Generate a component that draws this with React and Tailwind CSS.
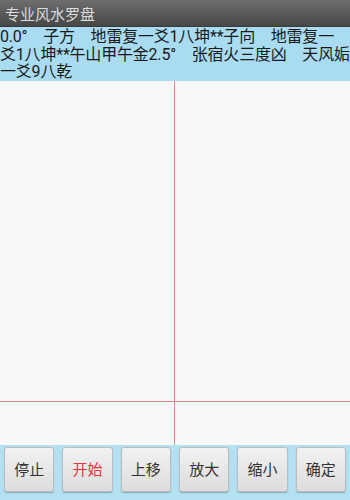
import React from "react";

const buttons = [
  { label: "停止", red: false },
  { label: "开始", red: true },
  { label: "上移", red: false },
  { label: "放大", red: false },
  { label: "缩小", red: false },
  { label: "确定", red: false },
];

const infoLines = [
  "0.0°\u3000子方\u3000地雷复一爻1八坤**子向\u3000地雷复一",
  "爻1八坤**午山甲午金2.5°\u3000张宿火三度凶\u3000天风姤",
  "一爻9八乾",
];

export default function App() {
  return (
    <div
      className="w-[350px] h-[500px] flex flex-col overflow-hidden bg-[#f7f7f7]"
      style={{ fontFamily: '"Noto Sans CJK SC", "Noto Sans", sans-serif' }}
    >
      {/* title bar */}
      <div className="h-[27px] shrink-0 flex items-center pl-[5px] bg-gradient-to-b from-[#6e6e6e] to-[#474747] border-b border-[#3a3a3a]">
        <span className="text-[15px] leading-none text-[#dcdcdc]">专业风水罗盘</span>
      </div>

      {/* info */}
      <div
        className="h-[54px] shrink-0 overflow-hidden bg-[#a9dcf0] pt-[1px] text-[16px] leading-[17.5px] tracking-[-0.2px] text-[#1a1a1a]"
        style={{ fontFamily: 'Roboto, "Noto Sans CJK SC", sans-serif' }}
      >
        {infoLines.map((line, i) => (
          <div key={i} className="whitespace-pre">
            {line}
          </div>
        ))}
      </div>

      {/* canvas */}
      <div className="flex-1 grid grid-cols-[174px_1px_1fr] grid-rows-[320px_1px_1fr] bg-[#f8f8f8]">
        <div />
        <div className="bg-[#d9868a]" />
        <div />
        <div className="bg-[#d9868a]" />
        <div className="bg-[#d9868a]" />
        <div className="bg-[#d9868a]" />
        <div />
        <div className="bg-[#d9868a]" />
        <div />
      </div>

      {/* buttons */}
      <div className="h-[55px] shrink-0 bg-[#b3e1f1] flex gap-[8px] px-[4px] pt-[2px] pb-[8px]">
        {buttons.map((b) => (
          <div
            key={b.label}
            className="flex-1 flex items-center justify-center rounded-[3px] border border-[#bdbdbd] bg-gradient-to-b from-[#f2f2f2] to-[#dcdcdc] shadow-[0_1px_1px_rgba(0,0,0,0.25)]"
          >
            <span className={"text-[15px] " + (b.red ? "text-[#e8333a]" : "text-[#333333]")}>
              {b.label}
            </span>
          </div>
        ))}
      </div>
    </div>
  );
}
